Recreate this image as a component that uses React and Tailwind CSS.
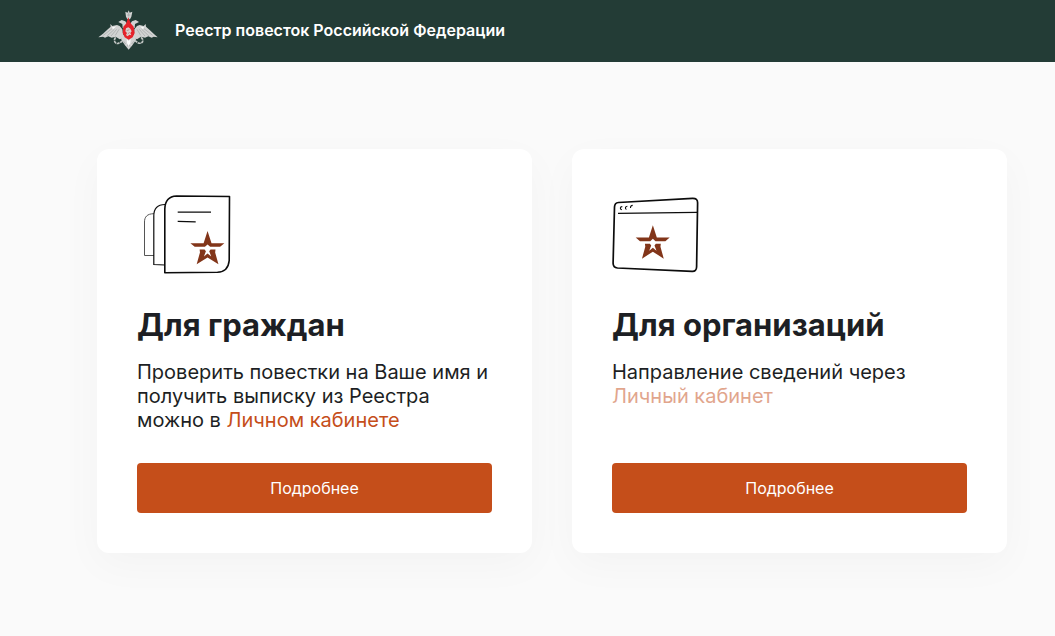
function Emblem() {
  return (
    <svg viewBox="24 30 178 120" className="h-10 w-[60px] shrink-0" aria-hidden="true">
      <g fill="#d2d3d3">
        <path d="M24 112 L38 101 L50 90 L61 80 L60 72 L66 78 L80 75 L88 78 L96 88 L100 114 L88 118 L76 110 L64 113 L54 109 L44 113 L38 110 Z" />
        <path d="M202 112 L190 101 L178 90 L167 80 L166 72 L160 78 L148 75 L140 78 L132 88 L130 114 L140 118 L152 110 L164 113 L174 109 L184 113 L190 110 Z" />
        <path d="M84 66 L94 60 L105 64 L112 74 L108 86 L97 84 L96 72 Z" />
        <path d="M146 66 L136 60 L125 64 L118 74 L122 86 L133 84 L134 72 Z" />
        <path d="M94 104 L134 104 L137 120 L126 136 L115 149 L104 136 L93 120 Z" />
        <path d="M105 35 L112 38 L115 31 L118 38 L126 35 L123 50 L119 58 L111 58 L107 50 Z" />
      </g>
      <g fill="none" stroke="#c3c7c5" strokeWidth="5">
        <path d="M76 112 C68 121 74 133 84 130 L96 124" strokeDasharray="9 2" />
        <path d="M152 112 C163 120 156 133 144 129 L134 122" strokeDasharray="9 2" />
      </g>
      <g fill="none" stroke="#a0a5a3" strokeWidth="2">
        <path d="M39 106 L65 86 M49 109 L72 88 M62 108 L79 88 M75 106 L86 88" />
        <path d="M187 106 L161 86 M177 109 L154 88 M164 108 L147 88 M151 106 L140 88" />
        <path d="M100 124 L106 132 M130 124 L124 132 M110 140 L115 131 L120 140" />
        <path d="M110 45 L120 45 M115 38 L115 50" />
      </g>
      <g fill="#fafafa">
        <path d="M65 82 L78 79 L68 88 Z M161 82 L149 79 L158 88 Z" />
        <path d="M109 116 L115 123 L121 116 L120 130 L115 138 L110 130 Z" />
      </g>
      <path d="M114 52 L121 70 L130 80 L133 99 L127 112 L115 119 L103 112 L97 99 L99 80 L107 71 Z" fill="#e5222b" />
      <path d="M107 85 L114 82 L120 86 L124 94 L120 99 L123 106 L117 104 L112 109 L107 105 L110 99 L105 94 Z" fill="#dccfce" />
      <path d="M109 92 L117 89 M112 103 L118 96" fill="none" stroke="#a87575" strokeWidth="2" />
    </svg>
  );
}

function Star({ transform }) {
  return (
    <g transform={transform} fill="#823519">
      <path d="M52 0 L64 37 H103 L90 48 H60 L52 41 L44 48 H13 L0 37 H40 Z" />
      <path d="M28 56 H43 L47 61 L41 77 L52 68 L63 77 L57 61 L61 56 H76 L75 65 L85 101 L52 80 L19 101 L29 65 Z" />
    </g>
  );
}

function PagesIcon() {
  return (
    <svg viewBox="0 0 96 96" className="size-24" fill="none" stroke="#0c0c0c" aria-hidden="true">
      <path d="M17 24.7 C10 24.7 7.5 28 7.5 33 V66.5 H17" stroke="#555" strokeWidth="1" />
      <path d="M28 15.5 C20 15.5 16.8 20 16.8 27 V75.5 L28 76" strokeWidth="1.2" />
      <path d="M39.5 7 L92.5 7.5 L92.2 71.5 C91.5 79 87.5 83 80.5 83.3 L27.8 83.7 V20 C28 12 32 7.4 39.5 7 Z" strokeWidth="1.6" strokeLinejoin="round" />
      <path d="M40.7 23.2 H74 M40.7 32.4 L58.7 32.8" strokeWidth="1.2" />
      <g stroke="none"><Star transform="translate(53.4 42) scale(0.33)" /></g>
    </svg>
  );
}

function WindowIcon() {
  return (
    <svg viewBox="0 0 96 96" className="size-24" fill="none" stroke="#0c0c0c" aria-hidden="true">
      <path d="M6.5 13.5 L80.5 9.3 C84 9.2 85.7 10.5 85.6 14 L84.6 78 C84.5 81 83 82.5 80 82.3 L5.5 79 C2.2 78.7 1 77 1.1 74 L2.5 18 C2.6 15 3.8 13.7 6.5 13.5 Z" strokeWidth="1.7" />
      <path d="M6 24.4 L85 23.4" strokeWidth="1.1" />
      <path d="M10.3 17.6 C7.9 17.5 7.6 20.5 9.9 20.8 M15.4 17.2 C13.2 17.2 12.8 19.6 14.4 20.4 M20.7 16.4 C19 16.4 18.4 17.6 18.5 19" strokeWidth="1.1" />
      <g stroke="none"><Star transform="translate(23.7 36.3) scale(0.33)" /></g>
    </svg>
  );
}

function Card({ icon, title, children }) {
  return (
    <section className="flex flex-col rounded-xl bg-white p-10 shadow-[0_12px_40px_rgba(0,0,0,0.03)]">
      {icon}
      <h2 className="mt-5 text-[31px] leading-10 font-bold">{title}</h2>
      <p className="mt-[15px] mb-[31px] text-xl leading-6">{children}</p>
      <button type="button" className="mt-auto h-[50px] w-full cursor-pointer rounded bg-[#c54e1a] text-base text-white">
        Подробнее
      </button>
    </section>
  );
}

export default function App() {
  return (
    <div className="min-h-screen bg-[#fafafa] font-['Inter',sans-serif] text-[#1d1f24]">
      <header className="flex h-[62px] items-center gap-[17px] bg-[#233c36] pr-12 pb-0.5 pl-[98px]">
        <Emblem />
        <h1 className="text-base font-semibold text-white">Реестр повесток Российской Федерации</h1>
      </header>
      <main className="grid grid-cols-2 gap-10 pt-[87px] pr-12 pb-20 pl-[97px]">
        <Card icon={<PagesIcon />} title="Для граждан">
          Проверить повестки на Ваше имя и получить выписку из Реестра <br />
          можно в <a href="#citizens" className="text-[#c54e1a]">Личном кабинете</a>
        </Card>
        <Card icon={<WindowIcon />} title="Для организаций">
          Направление сведений через <br />
          <a href="#organizations" className="text-[#c54e1a] opacity-50">Личный кабинет</a>
        </Card>
      </main>
    </div>
  );
}
